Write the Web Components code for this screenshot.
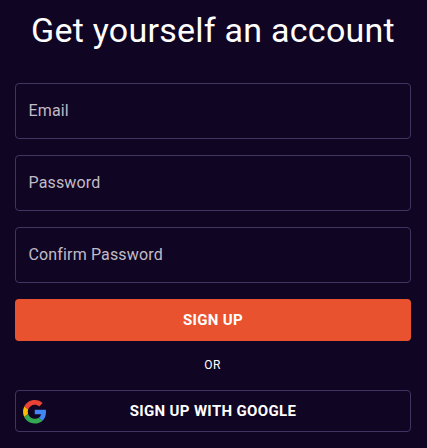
<!DOCTYPE html>
<html><head><meta charset="utf-8"><style>
html,body{margin:0;background:#110524;height:448px;overflow:hidden}
body{font-family:Roboto,sans-serif}
</style></head><body>
<signup-form>
<text-field label="Email"></text-field>
<text-field label="Password"></text-field>
<text-field label="Confirm Password"></text-field>
<primary-button>SIGN UP</primary-button>
<or-divider>OR</or-divider>
<google-button>SIGN UP WITH GOOGLE</google-button>
</signup-form>
<script>
function def(name,html,init){customElements.define(name,class extends HTMLElement{constructor(){super();this.attachShadow({mode:'open'}).innerHTML=html;}connectedCallback(){init&&init(this)}})}
def('signup-form',`<style>:host{display:flex;flex-direction:column;box-sizing:border-box;width:427px;height:448px;padding:0 16px 0 15px;overflow:hidden}
h1{margin:0;height:60px;display:flex;align-items:center;justify-content:center;font:400 34px/40px Roboto,sans-serif;color:#fff;letter-spacing:.25px;white-space:nowrap}
.f{display:flex;flex-direction:column;padding-top:23px}</style>
<h1>Get yourself an account</h1><div class="f"><slot></slot></div>`);
def('text-field',`<style>:host{display:flex;align-items:center;box-sizing:border-box;height:56px;margin-bottom:16px;padding:0 12.5px;border:1px solid #3f3560;border-radius:4px;color:#c0bcc6;font:400 16px/24px Roboto,sans-serif;letter-spacing:.15px}</style><span id="l"></span>`,e=>{e.shadowRoot.getElementById('l').textContent=e.getAttribute('label')});
def('primary-button',`<style>:host{display:flex;align-items:center;justify-content:center;height:42px;border-radius:4px;background:#e9522e;color:#fff;font:700 15px/24px Roboto,sans-serif;letter-spacing:.35px}</style><slot></slot>`);
def('or-divider',`<style>:host{display:flex;align-items:center;justify-content:center;box-sizing:border-box;height:49px;padding:0 1px 2px 0;color:#fff;font:400 12px/16px Roboto,sans-serif;letter-spacing:.4px}</style><slot></slot>`);
def('google-button',`<style>:host{display:flex;align-items:center;justify-content:center;position:relative;box-sizing:border-box;height:42px;border:1px solid #3f3560;border-radius:4px;color:#fff;font:700 15px/24px Roboto,sans-serif;letter-spacing:.35px}
svg{position:absolute;left:7px;top:9px;width:23.5px;height:23.5px}</style>
<svg viewBox="0 0 48 48"><path fill="#EA4335" d="M24 9.5c3.54 0 6.71 1.22 9.21 3.6l6.85-6.85C35.9 2.38 30.47 0 24 0 14.62 0 6.51 5.38 2.56 13.22l7.98 6.19C12.43 13.72 17.74 9.5 24 9.5z"/><path fill="#4285F4" d="M46.98 24.55c0-1.57-.15-3.09-.38-4.55H24v9.02h12.94c-.58 2.96-2.26 5.48-4.78 7.18l7.73 6c4.51-4.18 7.09-10.36 7.09-17.65z"/><path fill="#FBBC05" d="M10.53 28.59c-.48-1.45-.76-2.99-.76-4.59s.27-3.14.76-4.59l-7.98-6.19C.92 16.46 0 20.12 0 24c0 3.88.92 7.54 2.56 10.78l7.97-6.19z"/><path fill="#34A853" d="M24 48c6.48 0 11.93-2.13 15.89-5.81l-7.73-6c-2.15 1.45-4.92 2.3-8.16 2.3-6.26 0-11.57-4.22-13.47-9.91l-7.98 6.19C6.51 42.62 14.62 48 24 48z"/></svg><slot></slot>`);
</script></body></html>
